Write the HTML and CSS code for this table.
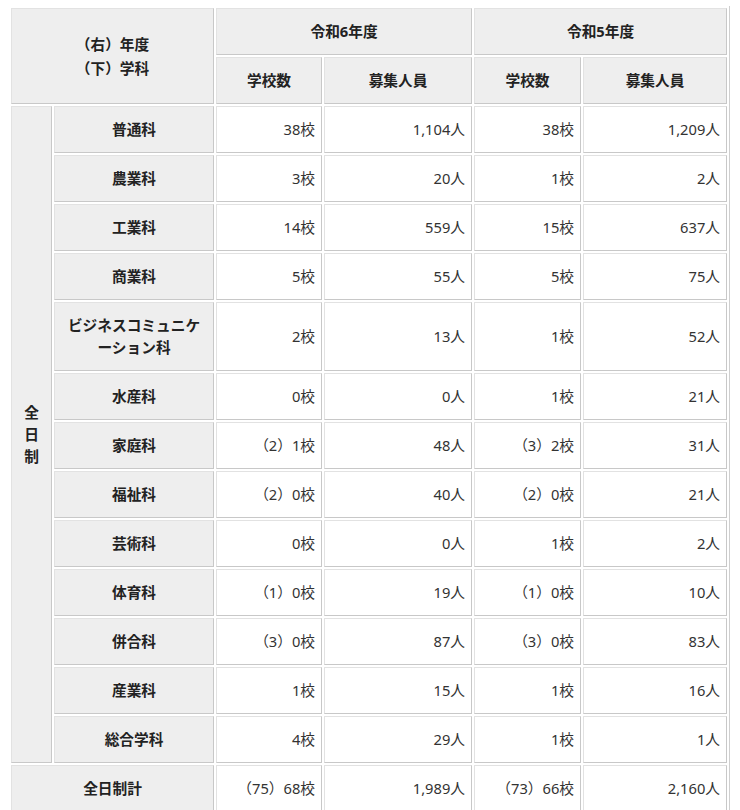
FILE: index.html
```html
<!DOCTYPE html>
<html lang="ja">
<head>
<meta charset="utf-8">
<title>募集学科</title>
<link rel="stylesheet" href="styles.css">
</head>
<body>
<div class="wrap">
<table class="data">
<colgroup>
<col class="c1"><col class="c2"><col class="c3"><col class="c4"><col class="c5"><col class="c6">
</colgroup>
<thead>
<tr>
<th rowspan="2" colspan="2" class="corner">（右）年度<br>（下）学科</th>
<th colspan="2">令和6年度</th>
<th colspan="2">令和5年度</th>
</tr>
<tr>
<th>学校数</th><th>募集人員</th><th>学校数</th><th>募集人員</th>
</tr>
</thead>
<tbody>
<tr><th rowspan="13" class="vert">全日制</th><th>普通科</th><td>38校</td><td>1,104人</td><td>38校</td><td>1,209人</td></tr>
<tr><th>農業科</th><td>3校</td><td>20人</td><td>1校</td><td>2人</td></tr>
<tr><th>工業科</th><td>14校</td><td>559人</td><td>15校</td><td>637人</td></tr>
<tr><th>商業科</th><td>5校</td><td>55人</td><td>5校</td><td>75人</td></tr>
<tr><th>ビジネスコミュニケーション科</th><td>2校</td><td>13人</td><td>1校</td><td>52人</td></tr>
<tr><th>水産科</th><td>0校</td><td>0人</td><td>1校</td><td>21人</td></tr>
<tr><th>家庭科</th><td>（2）1校</td><td>48人</td><td>（3）2校</td><td>31人</td></tr>
<tr><th>福祉科</th><td>（2）0校</td><td>40人</td><td>（2）0校</td><td>21人</td></tr>
<tr><th>芸術科</th><td>0校</td><td>0人</td><td>1校</td><td>2人</td></tr>
<tr><th>体育科</th><td>（1）0校</td><td>19人</td><td>（1）0校</td><td>10人</td></tr>
<tr><th>併合科</th><td>（3）0校</td><td>87人</td><td>（3）0校</td><td>83人</td></tr>
<tr><th>産業科</th><td>1校</td><td>15人</td><td>1校</td><td>16人</td></tr>
<tr><th>総合学科</th><td>4校</td><td>29人</td><td>1校</td><td>1人</td></tr>
<tr><th colspan="2">全日制計</th><td>（75）68校</td><td>1,989人</td><td>（73）66校</td><td>2,160人</td></tr>
</tbody>
</table>
</div>
</body>
</html>
```
FILE: styles.css
```css
html, body {
  margin: 0;
  padding: 0;
  background: #fff;
}
body {
  font-family: "Noto Sans", "Noto Sans CJK JP", sans-serif;
  font-size: 14.7px;
  color: #333;
}
.wrap {
  padding: 6px 0 0 9px;
}
.data {
  table-layout: fixed;
  width: 720px;
  border-collapse: separate;
  border-spacing: 2px;
  border-right: 1px solid #cfcfcf;
}
.c1 { width: 41px; }
.c2 { width: 160px; }
.c3 { width: 106px; }
.c4 { width: 148px; }
.c5 { width: 107px; }
.c6 { width: 144px; }
.data th,
.data td {
  box-sizing: border-box;
  border: 1px solid;
  border-color: #e2e2e2 #c8c8c8 #c8c8c8 #e2e2e2;
  padding: 11px 6px 12px;
  line-height: 22px;
  vertical-align: middle;
}
.data th {
  background: #eeeeee;
  font-weight: bold;
  text-align: center;
  color: #222;
  padding-left: 10px;
  padding-right: 10px;
}
.data td {
  background: #fff;
  text-align: right;
}
.data th.corner {
  line-height: 24px;
}
.data th.vert {
  padding-left: 11px;
  padding-right: 11px;
}
```
